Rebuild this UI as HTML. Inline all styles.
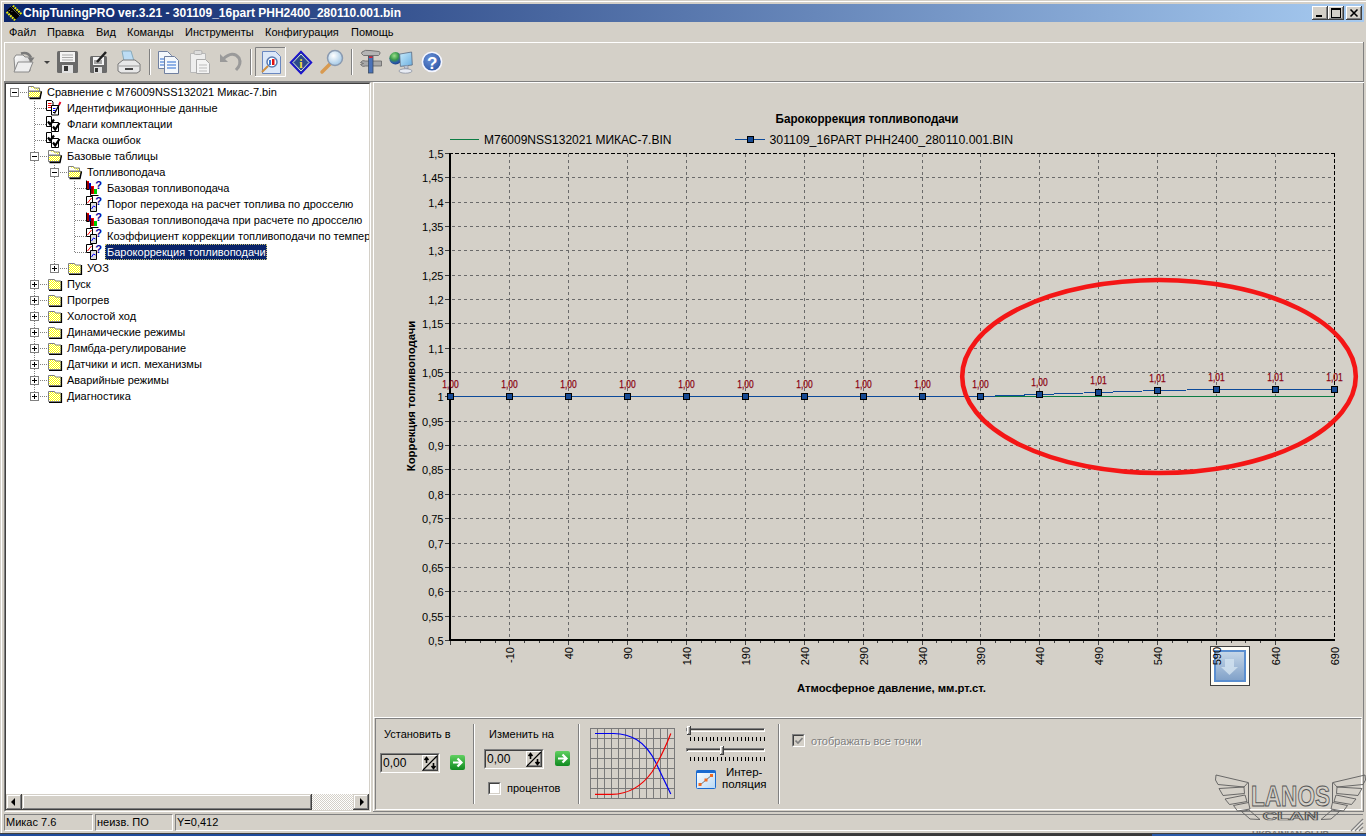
<!DOCTYPE html>
<html><head><meta charset="utf-8">
<style>
*{margin:0;padding:0;box-sizing:border-box}
html,body{width:1366px;height:836px;overflow:hidden;background:#d4d0c8;font-family:"Liberation Sans",sans-serif;font-size:11px;color:#000}
.a{position:absolute}
.t{position:absolute;white-space:nowrap;line-height:13px}
.bx{position:absolute}
</style></head><body>
<!-- window frame -->
<div class="a" style="left:1px;top:1px;width:1365px;height:1px;background:#fff"></div>
<div class="a" style="left:1px;top:1px;width:1px;height:835px;background:#fff"></div>
<!-- title bar -->
<div class="a" style="left:4px;top:4px;width:1360px;height:18px;background:linear-gradient(to right,#0a246a,#a6caf0)"></div>
<svg class="a" style="left:4px;top:4px" width="20" height="18">
<g transform="translate(10 9) rotate(-45) scale(0.85)">
<rect x="-4" y="-8" width="8" height="15" fill="#000"/>
<g fill="#f0f000"><rect x="-6.5" y="-7" width="2.5" height="2"/><rect x="-6.5" y="-4" width="2.5" height="2"/><rect x="-6.5" y="-1" width="2.5" height="2"/><rect x="-6.5" y="2" width="2.5" height="2"/><rect x="-6.5" y="5" width="2.5" height="2"/>
<rect x="4" y="-7" width="2.5" height="2"/><rect x="4" y="-4" width="2.5" height="2"/><rect x="4" y="-1" width="2.5" height="2"/><rect x="4" y="2" width="2.5" height="2"/><rect x="4" y="5" width="2.5" height="2"/></g>
<path d="M-3 -6h2M-1 -3h1" stroke="#aaa"/><path d="M2.5 -8v15" stroke="#bbb" stroke-dasharray="1 1"/>
</g></svg>
<div class="t" style="left:23px;top:6px;font-weight:bold;font-size:12px;color:#fff;line-height:14px">ChipTuningPRO ver.3.21 - 301109_16part PHH2400_280110.001.bin</div>
<!-- caption buttons -->
<svg class="a" style="left:1312px;top:6px" width="50" height="14" shape-rendering="crispEdges">
<g id="cb">
<rect x="0" y="0" width="16" height="14" fill="#404040"/><rect x="0" y="0" width="15" height="13" fill="#fff"/><rect x="1" y="1" width="14" height="12" fill="#808080"/><rect x="1" y="1" width="13" height="11" fill="#d4d0c8"/>
</g>
<use href="#cb" x="16"/><use href="#cb" x="34"/>
<rect x="4" y="9" width="6" height="2" fill="#000"/>
<rect x="19" y="2" width="9" height="9" fill="none" stroke="#000" stroke-width="1" transform="translate(0.5 0.5)"/><rect x="19" y="3" width="10" height="1" fill="#000"/>
<path d="M38.5 3.5l7 7M45.5 3.5l-7 7" stroke="#000" stroke-width="1.6" shape-rendering="auto"/>
</svg>

<!-- menu -->
<div class="t" style="left:9px;top:26px">Файл</div>
<div class="t" style="left:47px;top:26px">Правка</div>
<div class="t" style="left:96px;top:26px">Вид</div>
<div class="t" style="left:127px;top:26px">Команды</div>
<div class="t" style="left:185px;top:26px">Инструменты</div>
<div class="t" style="left:265px;top:26px">Конфигурация</div>
<div class="t" style="left:351px;top:26px">Помощь</div>

<!-- toolbar borders -->
<div class="a" style="left:4px;top:42px;width:1360px;height:1px;background:#fff"></div>
<div class="a" style="left:4px;top:42px;width:1px;height:40px;background:#fff"></div>
<div class="a" style="left:4px;top:81px;width:1360px;height:1px;background:#808080"></div>
<div class="a" style="left:1363px;top:42px;width:1px;height:770px;background:#808080"></div>
<svg class="a" style="left:0;top:42px" width="460" height="39">
<defs>
<linearGradient id="gpaper" x1="0" y1="0" x2="1" y2="1"><stop offset="0" stop-color="#fff"/><stop offset="1" stop-color="#c8c8c8"/></linearGradient>
<linearGradient id="gblue" x1="0" y1="0" x2="0" y2="1"><stop offset="0" stop-color="#d8e8f8"/><stop offset="1" stop-color="#8ab0dc"/></linearGradient>
<radialGradient id="glens" cx="0.4" cy="0.35" r="0.7"><stop offset="0" stop-color="#ffffff"/><stop offset="1" stop-color="#9cc4e4"/></radialGradient>
<radialGradient id="gglobe" cx="0.4" cy="0.3" r="0.75"><stop offset="0" stop-color="#9ae08a"/><stop offset="0.45" stop-color="#3a9a4a"/><stop offset="0.75" stop-color="#2a5aa8"/><stop offset="1" stop-color="#183a80"/></radialGradient>
<linearGradient id="gmon" x1="0" y1="0" x2="1" y2="1"><stop offset="0" stop-color="#c8ecfc"/><stop offset="1" stop-color="#6aaee0"/></linearGradient>
<radialGradient id="ghelp" cx="0.4" cy="0.35" r="0.7"><stop offset="0" stop-color="#6a92d8"/><stop offset="1" stop-color="#2a54a4"/></radialGradient>
</defs>
<path d="M14 16l2-3h7l2 2h5v14H15z" fill="url(#gpaper)" stroke="#8a8a8a"/>
<path d="M14 30l4-10h15l-4 10z" fill="#eee" stroke="#8a8a8a"/>
<path d="M21 11.5q7-2 10 4" stroke="#7a7a7a" stroke-width="2.6" fill="none"/><path d="M27.5 15.5h7l-3.5 5z" fill="#7a7a7a"/>
<path d="M44 19h6l-3 3z" fill="#404040"/>
<rect x="57" y="9" width="21" height="22" rx="1.5" fill="#6a6a6a"/><rect x="60" y="10" width="15" height="10" fill="#f4f4f4"/><path d="M62 13h11M62 15.5h11M62 18h11" stroke="#aaa"/><rect x="62" y="23" width="11" height="8" fill="#e0e0e0"/><rect x="64" y="24" width="4" height="5" fill="#333"/>
<rect x="90" y="14" width="17" height="17" rx="1.5" fill="#6a6a6a"/><rect x="93" y="15" width="11" height="8" fill="#f4f4f4"/><path d="M94 19h8M94 21h8" stroke="#555"/><rect x="94" y="25" width="8" height="6" fill="#e0e0e0"/><rect x="95" y="26" width="3" height="4" fill="#333"/>
<path d="M97 20l9-10" stroke="#222" stroke-width="2.5"/>
<path d="M122 9h9l3 10h-10z" fill="#bcdcf4" stroke="#8ab"/>
<path d="M118 22l5-4h12l5 4v7l-3 2h-16l-3-2z" fill="#e8e8e8" stroke="#777"/><path d="M119 24h20" stroke="#999"/><rect x="125" y="26" width="8" height="2" fill="#444"/>
<rect x="149" y="7" width="1" height="26" fill="#808080"/><rect x="150" y="7" width="1" height="26" fill="#fff"/>
<path d="M158.5 9.5h9l4 4v13h-13z" fill="#f4f8fc" stroke="#7080a0"/><path d="M160 17h6M160 20h6M160 23h6" stroke="#2a6ad0" stroke-width="1.2"/>
<path d="M164.5 14.5h10l4 4v13h-14z" fill="#f4f8fc" stroke="#7080a0"/><path d="M167 20h9M167 23h9M167 26h9" stroke="#2a6ad0" stroke-width="1.2"/>
<path d="M190.5 11.5h15v19h-15z" fill="#eee" stroke="#b8b8b8"/><rect x="194" y="8.5" width="8" height="4" rx="1.5" fill="#ddd" stroke="#b0b0b0"/>
<path d="M196.5 17.5h9l4 4v10h-13z" fill="#f4f4f4" stroke="#aaa"/><path d="M199 23h8M199 26h8M199 29h8" stroke="#bbb"/>
<path d="M223 17q10-9 16-1q3 6-3 12" stroke="#9a9a9a" stroke-width="3" fill="none"/><path d="M220 12v8h8z" fill="#9a9a9a"/>
<rect x="250" y="7" width="1" height="26" fill="#808080"/><rect x="251" y="7" width="1" height="26" fill="#fff"/>
<rect x="255" y="5" width="31" height="30" fill="#dbd8d1"/><path d="M255.5 34V5.5H285.5" stroke="#808080" fill="none"/><path d="M255 34.5H285.5V5" stroke="#fff" fill="none"/>
<path d="M262.5 9.5h13l5 5v17h-18z" fill="#dce8f8" stroke="#6a88c0"/><circle cx="272" cy="20" r="5" fill="#fff" stroke="#5a7ab0" stroke-width="1.5"/><rect x="272" y="17" width="2.5" height="6" fill="#e01010"/><rect x="269" y="18" width="2" height="5" fill="#3a7ad0"/><path d="M268 24l-6 6" stroke="#d09040" stroke-width="2"/>
<path d="M301 9.5L311.5 20.5L301 31.5L290.5 20.5Z" fill="#2c4a8a" stroke="#1a10d0" stroke-width="1.6"/><path d="M301 12L309 20.5L301 29L293 20.5Z" fill="none" stroke="#fff" stroke-width="0.8"/><text x="301" y="25.5" font-size="12" font-weight="bold" fill="#f0e040" text-anchor="middle" font-family="Liberation Serif">i</text>
<path d="M322 30l8-8" stroke="#d89a50" stroke-width="3.5" stroke-linecap="round"/><circle cx="335" cy="16" r="7.5" fill="url(#glens)" stroke="#8a9ab0" stroke-width="1.5"/>
<rect x="351" y="7" width="1" height="26" fill="#808080"/><rect x="352" y="7" width="1" height="26" fill="#fff"/>
<path d="M360.5 20.5q2-3 5-1.5h16v5h-16q-3 1.5-5-1.5l3-1z" fill="#a8a8a8" stroke="#666" stroke-width="0.8"/>
<rect x="368.5" y="14.5" width="4.5" height="16.5" fill="#4a72b8" stroke="#3a4a60" stroke-width="0.8"/><rect x="369" y="14.5" width="3.5" height="1.5" fill="#e02030"/>
<path d="M362 10q3-2.5 8-1.5l9 1q2 0.5 0.5 3l-1 1h-15l-2-2z" fill="#b4b4b4" stroke="#6a6a6a" stroke-width="0.9"/>
<circle cx="395.5" cy="16.299999999999997" r="6.2" fill="url(#gglobe)"/>
<path d="M399.7 12.100000000000001L411.6 10L412.3 23L400.4 24.400000000000006Z" fill="url(#gmon)" stroke="#5a6a80" stroke-width="0.8"/>
<path d="M404 24l1 3h3l0-3.5" fill="#b8c0d0" stroke="#7a8090" stroke-width="0.6"/><ellipse cx="405.5" cy="29" rx="6.5" ry="2.2" fill="#e8ecf4" stroke="#8a90a0" stroke-width="0.8"/>
<circle cx="432" cy="19.799999999999997" r="9.6" fill="url(#ghelp)" stroke="#f4f6ff" stroke-width="1.6"/><text x="432.3" y="26.799999999999997" font-size="17" font-weight="bold" fill="#fff" text-anchor="middle" font-family="Liberation Sans">?</text>
</svg>

<!-- tree panel -->
<div class="a" style="left:4px;top:82px;width:367px;height:730px;border-top:1px solid #808080;border-left:1px solid #808080;border-right:1px solid #fff;border-bottom:1px solid #fff"></div>
<div class="a" style="left:5px;top:83px;width:365px;height:728px;border-top:1px solid #404040;border-left:1px solid #404040;border-right:1px solid #d4d0c8;border-bottom:1px solid #d4d0c8;background:#fff"></div>
<svg class="a" style="left:6px;top:84px" width="363" height="710">
<defs>
<pattern id="chk" width="2" height="2" patternUnits="userSpaceOnUse"><rect width="2" height="2" fill="#ffff00"/><rect width="1" height="1" fill="#fff"/><rect x="1" y="1" width="1" height="1" fill="#fff"/></pattern>
<symbol id="fclosed" viewBox="0 0 16 16"><path d="M1.5 3.5h6l1 1.5h5.5v8.5h-12.5z" fill="url(#chk)" stroke="#808080"/><path d="M14.5 5v9.5H2" stroke="#000" stroke-width="1.2" fill="none"/></symbol>
<symbol id="fopen" viewBox="0 0 16 16"><path d="M1.5 2.5h5l1 1.5h5v3" fill="url(#chk)" stroke="#808080"/><path d="M1.5 2.5v11h12v-6.5h-12" fill="url(#chk)" stroke="#808080"/><path d="M1.5 7.5h13l-2 6h-11z" fill="url(#chk)" stroke="#808080"/><path d="M14.5 7.5l-1.5 7H2.5" stroke="#000" stroke-width="1.3" fill="none"/></symbol>
<symbol id="docedit" viewBox="0 0 16 16"><path d="M0.5 0.5h5l1.5 1.5v8.5h-6.5z" fill="#fff" stroke="#000"/><path d="M2 3.5h3.5M2 5.5h3.5M2 7.5h3.5" stroke="#f00"/><path d="M5.5 5.5h7v9.5h-7z" fill="#fff" stroke="#000"/><path d="M7 8.5h2.5M7 10.5h2.5" stroke="#00f"/><path d="M7 12.5h2" stroke="#000"/><path d="M8.5 13.5L13 5" stroke="#000" stroke-width="1.4"/><path d="M13 5L14.5 2" stroke="#e00020" stroke-width="1.8"/></symbol>
<symbol id="check" viewBox="0 0 16 16"><path d="M0.5 0.5h5v10h-5z" fill="#fff" stroke="#000"/><path d="M5.5 6.5h7v9h-7z" fill="#fff" stroke="#000"/><path d="M2 5.5l2.2 3 3.8-5" stroke="#000" stroke-width="2.2" fill="none"/><path d="M7 10.5l2.2 3 4.3-6.5" stroke="#000" stroke-width="2.2" fill="none"/></symbol>
<symbol id="bar" viewBox="0 0 16 16"><path d="M0.5 0.5v9h3M4.5 4.5v11h8" stroke="#000" fill="none"/><rect x="1" y="1" width="2" height="8" fill="#f00"/><rect x="3" y="3" width="2" height="6" fill="#00f"/><rect x="5" y="6" width="3" height="8" fill="#f00"/><rect x="8" y="9" width="3" height="5" fill="#0c0"/><path d="M2 2v7M4 4v6M6 7v7" stroke="#000" stroke-width="0.8"/><text x="12.5" y="9" font-size="11" font-weight="bold" fill="#0000a0" text-anchor="middle" font-family="Liberation Sans">?</text></symbol>
<symbol id="tbl" viewBox="0 0 16 16"><path d="M0.5 0.5h6v8h-6z" fill="#fff" stroke="#000"/><path d="M1.5 7l4-5" stroke="#f00"/><path d="M4.5 6.5h6v9h-6z" fill="#ddd" stroke="#000"/><path d="M5.5 13l2-3 2 1" stroke="#00f" fill="none"/><text x="12.5" y="9" font-size="11" font-weight="bold" fill="#0000a0" text-anchor="middle" font-family="Liberation Sans">?</text></symbol>
</defs>
<g fill="#808080"><rect x="28" y="17" width="1" height="1"/><rect x="28" y="19" width="1" height="1"/><rect x="28" y="21" width="1" height="1"/><rect x="28" y="23" width="1" height="1"/><rect x="28" y="25" width="1" height="1"/><rect x="28" y="27" width="1" height="1"/><rect x="28" y="29" width="1" height="1"/><rect x="28" y="31" width="1" height="1"/><rect x="28" y="33" width="1" height="1"/><rect x="28" y="35" width="1" height="1"/><rect x="28" y="37" width="1" height="1"/><rect x="28" y="39" width="1" height="1"/><rect x="28" y="41" width="1" height="1"/><rect x="28" y="43" width="1" height="1"/><rect x="28" y="45" width="1" height="1"/><rect x="28" y="47" width="1" height="1"/><rect x="28" y="49" width="1" height="1"/><rect x="28" y="51" width="1" height="1"/><rect x="28" y="53" width="1" height="1"/><rect x="28" y="55" width="1" height="1"/><rect x="28" y="57" width="1" height="1"/><rect x="28" y="59" width="1" height="1"/><rect x="28" y="61" width="1" height="1"/><rect x="28" y="63" width="1" height="1"/><rect x="28" y="65" width="1" height="1"/><rect x="28" y="67" width="1" height="1"/><rect x="28" y="69" width="1" height="1"/><rect x="28" y="71" width="1" height="1"/><rect x="28" y="73" width="1" height="1"/><rect x="28" y="75" width="1" height="1"/><rect x="28" y="77" width="1" height="1"/><rect x="28" y="79" width="1" height="1"/><rect x="28" y="81" width="1" height="1"/><rect x="28" y="83" width="1" height="1"/><rect x="28" y="85" width="1" height="1"/><rect x="28" y="87" width="1" height="1"/><rect x="28" y="89" width="1" height="1"/><rect x="28" y="91" width="1" height="1"/><rect x="28" y="93" width="1" height="1"/><rect x="28" y="95" width="1" height="1"/><rect x="28" y="97" width="1" height="1"/><rect x="28" y="99" width="1" height="1"/><rect x="28" y="101" width="1" height="1"/><rect x="28" y="103" width="1" height="1"/><rect x="28" y="105" width="1" height="1"/><rect x="28" y="107" width="1" height="1"/><rect x="28" y="109" width="1" height="1"/><rect x="28" y="111" width="1" height="1"/><rect x="28" y="113" width="1" height="1"/><rect x="28" y="115" width="1" height="1"/><rect x="28" y="117" width="1" height="1"/><rect x="28" y="119" width="1" height="1"/><rect x="28" y="121" width="1" height="1"/><rect x="28" y="123" width="1" height="1"/><rect x="28" y="125" width="1" height="1"/><rect x="28" y="127" width="1" height="1"/><rect x="28" y="129" width="1" height="1"/><rect x="28" y="131" width="1" height="1"/><rect x="28" y="133" width="1" height="1"/><rect x="28" y="135" width="1" height="1"/><rect x="28" y="137" width="1" height="1"/><rect x="28" y="139" width="1" height="1"/><rect x="28" y="141" width="1" height="1"/><rect x="28" y="143" width="1" height="1"/><rect x="28" y="145" width="1" height="1"/><rect x="28" y="147" width="1" height="1"/><rect x="28" y="149" width="1" height="1"/><rect x="28" y="151" width="1" height="1"/><rect x="28" y="153" width="1" height="1"/><rect x="28" y="155" width="1" height="1"/><rect x="28" y="157" width="1" height="1"/><rect x="28" y="159" width="1" height="1"/><rect x="28" y="161" width="1" height="1"/><rect x="28" y="163" width="1" height="1"/><rect x="28" y="165" width="1" height="1"/><rect x="28" y="167" width="1" height="1"/><rect x="28" y="169" width="1" height="1"/><rect x="28" y="171" width="1" height="1"/><rect x="28" y="173" width="1" height="1"/><rect x="28" y="175" width="1" height="1"/><rect x="28" y="177" width="1" height="1"/><rect x="28" y="179" width="1" height="1"/><rect x="28" y="181" width="1" height="1"/><rect x="28" y="183" width="1" height="1"/><rect x="28" y="185" width="1" height="1"/><rect x="28" y="187" width="1" height="1"/><rect x="28" y="189" width="1" height="1"/><rect x="28" y="191" width="1" height="1"/><rect x="28" y="193" width="1" height="1"/><rect x="28" y="195" width="1" height="1"/><rect x="28" y="197" width="1" height="1"/><rect x="28" y="199" width="1" height="1"/><rect x="28" y="201" width="1" height="1"/><rect x="28" y="203" width="1" height="1"/><rect x="28" y="205" width="1" height="1"/><rect x="28" y="207" width="1" height="1"/><rect x="28" y="209" width="1" height="1"/><rect x="28" y="211" width="1" height="1"/><rect x="28" y="213" width="1" height="1"/><rect x="28" y="215" width="1" height="1"/><rect x="28" y="217" width="1" height="1"/><rect x="28" y="219" width="1" height="1"/><rect x="28" y="221" width="1" height="1"/><rect x="28" y="223" width="1" height="1"/><rect x="28" y="225" width="1" height="1"/><rect x="28" y="227" width="1" height="1"/><rect x="28" y="229" width="1" height="1"/><rect x="28" y="231" width="1" height="1"/><rect x="28" y="233" width="1" height="1"/><rect x="28" y="235" width="1" height="1"/><rect x="28" y="237" width="1" height="1"/><rect x="28" y="239" width="1" height="1"/><rect x="28" y="241" width="1" height="1"/><rect x="28" y="243" width="1" height="1"/><rect x="28" y="245" width="1" height="1"/><rect x="28" y="247" width="1" height="1"/><rect x="28" y="249" width="1" height="1"/><rect x="28" y="251" width="1" height="1"/><rect x="28" y="253" width="1" height="1"/><rect x="28" y="255" width="1" height="1"/><rect x="28" y="257" width="1" height="1"/><rect x="28" y="259" width="1" height="1"/><rect x="28" y="261" width="1" height="1"/><rect x="28" y="263" width="1" height="1"/><rect x="28" y="265" width="1" height="1"/><rect x="28" y="267" width="1" height="1"/><rect x="28" y="269" width="1" height="1"/><rect x="28" y="271" width="1" height="1"/><rect x="28" y="273" width="1" height="1"/><rect x="28" y="275" width="1" height="1"/><rect x="28" y="277" width="1" height="1"/><rect x="28" y="279" width="1" height="1"/><rect x="28" y="281" width="1" height="1"/><rect x="28" y="283" width="1" height="1"/><rect x="28" y="285" width="1" height="1"/><rect x="28" y="287" width="1" height="1"/><rect x="28" y="289" width="1" height="1"/><rect x="28" y="291" width="1" height="1"/><rect x="28" y="293" width="1" height="1"/><rect x="28" y="295" width="1" height="1"/><rect x="28" y="297" width="1" height="1"/><rect x="28" y="299" width="1" height="1"/><rect x="28" y="301" width="1" height="1"/><rect x="28" y="303" width="1" height="1"/><rect x="28" y="305" width="1" height="1"/><rect x="28" y="307" width="1" height="1"/><rect x="28" y="309" width="1" height="1"/><rect x="28" y="311" width="1" height="1"/><rect x="48" y="81" width="1" height="1"/><rect x="48" y="83" width="1" height="1"/><rect x="48" y="85" width="1" height="1"/><rect x="48" y="87" width="1" height="1"/><rect x="48" y="89" width="1" height="1"/><rect x="48" y="91" width="1" height="1"/><rect x="48" y="93" width="1" height="1"/><rect x="48" y="95" width="1" height="1"/><rect x="48" y="97" width="1" height="1"/><rect x="48" y="99" width="1" height="1"/><rect x="48" y="101" width="1" height="1"/><rect x="48" y="103" width="1" height="1"/><rect x="48" y="105" width="1" height="1"/><rect x="48" y="107" width="1" height="1"/><rect x="48" y="109" width="1" height="1"/><rect x="48" y="111" width="1" height="1"/><rect x="48" y="113" width="1" height="1"/><rect x="48" y="115" width="1" height="1"/><rect x="48" y="117" width="1" height="1"/><rect x="48" y="119" width="1" height="1"/><rect x="48" y="121" width="1" height="1"/><rect x="48" y="123" width="1" height="1"/><rect x="48" y="125" width="1" height="1"/><rect x="48" y="127" width="1" height="1"/><rect x="48" y="129" width="1" height="1"/><rect x="48" y="131" width="1" height="1"/><rect x="48" y="133" width="1" height="1"/><rect x="48" y="135" width="1" height="1"/><rect x="48" y="137" width="1" height="1"/><rect x="48" y="139" width="1" height="1"/><rect x="48" y="141" width="1" height="1"/><rect x="48" y="143" width="1" height="1"/><rect x="48" y="145" width="1" height="1"/><rect x="48" y="147" width="1" height="1"/><rect x="48" y="149" width="1" height="1"/><rect x="48" y="151" width="1" height="1"/><rect x="48" y="153" width="1" height="1"/><rect x="48" y="155" width="1" height="1"/><rect x="48" y="157" width="1" height="1"/><rect x="48" y="159" width="1" height="1"/><rect x="48" y="161" width="1" height="1"/><rect x="48" y="163" width="1" height="1"/><rect x="48" y="165" width="1" height="1"/><rect x="48" y="167" width="1" height="1"/><rect x="48" y="169" width="1" height="1"/><rect x="48" y="171" width="1" height="1"/><rect x="48" y="173" width="1" height="1"/><rect x="48" y="175" width="1" height="1"/><rect x="48" y="177" width="1" height="1"/><rect x="48" y="179" width="1" height="1"/><rect x="48" y="181" width="1" height="1"/><rect x="48" y="183" width="1" height="1"/><rect x="68" y="97" width="1" height="1"/><rect x="68" y="99" width="1" height="1"/><rect x="68" y="101" width="1" height="1"/><rect x="68" y="103" width="1" height="1"/><rect x="68" y="105" width="1" height="1"/><rect x="68" y="107" width="1" height="1"/><rect x="68" y="109" width="1" height="1"/><rect x="68" y="111" width="1" height="1"/><rect x="68" y="113" width="1" height="1"/><rect x="68" y="115" width="1" height="1"/><rect x="68" y="117" width="1" height="1"/><rect x="68" y="119" width="1" height="1"/><rect x="68" y="121" width="1" height="1"/><rect x="68" y="123" width="1" height="1"/><rect x="68" y="125" width="1" height="1"/><rect x="68" y="127" width="1" height="1"/><rect x="68" y="129" width="1" height="1"/><rect x="68" y="131" width="1" height="1"/><rect x="68" y="133" width="1" height="1"/><rect x="68" y="135" width="1" height="1"/><rect x="68" y="137" width="1" height="1"/><rect x="68" y="139" width="1" height="1"/><rect x="68" y="141" width="1" height="1"/><rect x="68" y="143" width="1" height="1"/><rect x="68" y="145" width="1" height="1"/><rect x="68" y="147" width="1" height="1"/><rect x="68" y="149" width="1" height="1"/><rect x="68" y="151" width="1" height="1"/><rect x="68" y="153" width="1" height="1"/><rect x="68" y="155" width="1" height="1"/><rect x="68" y="157" width="1" height="1"/><rect x="68" y="159" width="1" height="1"/><rect x="68" y="161" width="1" height="1"/><rect x="68" y="163" width="1" height="1"/><rect x="68" y="165" width="1" height="1"/><rect x="68" y="167" width="1" height="1"/><rect x="14" y="8" width="1" height="1"/><rect x="16" y="8" width="1" height="1"/><rect x="18" y="8" width="1" height="1"/><rect x="20" y="8" width="1" height="1"/><rect x="29" y="24" width="1" height="1"/><rect x="31" y="24" width="1" height="1"/><rect x="33" y="24" width="1" height="1"/><rect x="35" y="24" width="1" height="1"/><rect x="37" y="24" width="1" height="1"/><rect x="39" y="24" width="1" height="1"/><rect x="29" y="40" width="1" height="1"/><rect x="31" y="40" width="1" height="1"/><rect x="33" y="40" width="1" height="1"/><rect x="35" y="40" width="1" height="1"/><rect x="37" y="40" width="1" height="1"/><rect x="39" y="40" width="1" height="1"/><rect x="29" y="56" width="1" height="1"/><rect x="31" y="56" width="1" height="1"/><rect x="33" y="56" width="1" height="1"/><rect x="35" y="56" width="1" height="1"/><rect x="37" y="56" width="1" height="1"/><rect x="39" y="56" width="1" height="1"/><rect x="34" y="72" width="1" height="1"/><rect x="36" y="72" width="1" height="1"/><rect x="38" y="72" width="1" height="1"/><rect x="40" y="72" width="1" height="1"/><rect x="54" y="88" width="1" height="1"/><rect x="56" y="88" width="1" height="1"/><rect x="58" y="88" width="1" height="1"/><rect x="60" y="88" width="1" height="1"/><rect x="69" y="104" width="1" height="1"/><rect x="71" y="104" width="1" height="1"/><rect x="73" y="104" width="1" height="1"/><rect x="75" y="104" width="1" height="1"/><rect x="77" y="104" width="1" height="1"/><rect x="79" y="104" width="1" height="1"/><rect x="69" y="120" width="1" height="1"/><rect x="71" y="120" width="1" height="1"/><rect x="73" y="120" width="1" height="1"/><rect x="75" y="120" width="1" height="1"/><rect x="77" y="120" width="1" height="1"/><rect x="79" y="120" width="1" height="1"/><rect x="69" y="136" width="1" height="1"/><rect x="71" y="136" width="1" height="1"/><rect x="73" y="136" width="1" height="1"/><rect x="75" y="136" width="1" height="1"/><rect x="77" y="136" width="1" height="1"/><rect x="79" y="136" width="1" height="1"/><rect x="69" y="152" width="1" height="1"/><rect x="71" y="152" width="1" height="1"/><rect x="73" y="152" width="1" height="1"/><rect x="75" y="152" width="1" height="1"/><rect x="77" y="152" width="1" height="1"/><rect x="79" y="152" width="1" height="1"/><rect x="69" y="168" width="1" height="1"/><rect x="71" y="168" width="1" height="1"/><rect x="73" y="168" width="1" height="1"/><rect x="75" y="168" width="1" height="1"/><rect x="77" y="168" width="1" height="1"/><rect x="79" y="168" width="1" height="1"/><rect x="54" y="184" width="1" height="1"/><rect x="56" y="184" width="1" height="1"/><rect x="58" y="184" width="1" height="1"/><rect x="60" y="184" width="1" height="1"/><rect x="34" y="200" width="1" height="1"/><rect x="36" y="200" width="1" height="1"/><rect x="38" y="200" width="1" height="1"/><rect x="40" y="200" width="1" height="1"/><rect x="34" y="216" width="1" height="1"/><rect x="36" y="216" width="1" height="1"/><rect x="38" y="216" width="1" height="1"/><rect x="40" y="216" width="1" height="1"/><rect x="34" y="232" width="1" height="1"/><rect x="36" y="232" width="1" height="1"/><rect x="38" y="232" width="1" height="1"/><rect x="40" y="232" width="1" height="1"/><rect x="34" y="248" width="1" height="1"/><rect x="36" y="248" width="1" height="1"/><rect x="38" y="248" width="1" height="1"/><rect x="40" y="248" width="1" height="1"/><rect x="34" y="264" width="1" height="1"/><rect x="36" y="264" width="1" height="1"/><rect x="38" y="264" width="1" height="1"/><rect x="40" y="264" width="1" height="1"/><rect x="34" y="280" width="1" height="1"/><rect x="36" y="280" width="1" height="1"/><rect x="38" y="280" width="1" height="1"/><rect x="40" y="280" width="1" height="1"/><rect x="34" y="296" width="1" height="1"/><rect x="36" y="296" width="1" height="1"/><rect x="38" y="296" width="1" height="1"/><rect x="40" y="296" width="1" height="1"/><rect x="34" y="312" width="1" height="1"/><rect x="36" y="312" width="1" height="1"/><rect x="38" y="312" width="1" height="1"/><rect x="40" y="312" width="1" height="1"/></g>
<rect x="4.5" y="4.5" width="8" height="8" fill="#fff" stroke="#808080"/>
<rect x="6" y="8" width="5" height="1" fill="#000"/>
<use href="#fopen" x="21" y="0" width="16" height="16"/>
<use href="#docedit" x="40" y="16" width="16" height="16"/>
<use href="#check" x="40" y="32" width="16" height="16"/>
<use href="#check" x="40" y="48" width="16" height="16"/>
<rect x="24.5" y="68.5" width="8" height="8" fill="#fff" stroke="#808080"/>
<rect x="26" y="72" width="5" height="1" fill="#000"/>
<use href="#fopen" x="41" y="64" width="16" height="16"/>
<rect x="44.5" y="84.5" width="8" height="8" fill="#fff" stroke="#808080"/>
<rect x="46" y="88" width="5" height="1" fill="#000"/>
<use href="#fopen" x="61" y="80" width="16" height="16"/>
<use href="#bar" x="80" y="96" width="16" height="16"/>
<use href="#tbl" x="80" y="112" width="16" height="16"/>
<use href="#bar" x="80" y="128" width="16" height="16"/>
<use href="#tbl" x="80" y="144" width="16" height="16"/>
<use href="#tbl" x="80" y="160" width="16" height="16"/>
<rect x="44.5" y="180.5" width="8" height="8" fill="#fff" stroke="#808080"/>
<rect x="46" y="184" width="5" height="1" fill="#000"/>
<rect x="48" y="182" width="1" height="5" fill="#000"/>
<use href="#fclosed" x="61" y="176" width="16" height="16"/>
<rect x="24.5" y="196.5" width="8" height="8" fill="#fff" stroke="#808080"/>
<rect x="26" y="200" width="5" height="1" fill="#000"/>
<rect x="28" y="198" width="1" height="5" fill="#000"/>
<use href="#fclosed" x="41" y="192" width="16" height="16"/>
<rect x="24.5" y="212.5" width="8" height="8" fill="#fff" stroke="#808080"/>
<rect x="26" y="216" width="5" height="1" fill="#000"/>
<rect x="28" y="214" width="1" height="5" fill="#000"/>
<use href="#fclosed" x="41" y="208" width="16" height="16"/>
<rect x="24.5" y="228.5" width="8" height="8" fill="#fff" stroke="#808080"/>
<rect x="26" y="232" width="5" height="1" fill="#000"/>
<rect x="28" y="230" width="1" height="5" fill="#000"/>
<use href="#fclosed" x="41" y="224" width="16" height="16"/>
<rect x="24.5" y="244.5" width="8" height="8" fill="#fff" stroke="#808080"/>
<rect x="26" y="248" width="5" height="1" fill="#000"/>
<rect x="28" y="246" width="1" height="5" fill="#000"/>
<use href="#fclosed" x="41" y="240" width="16" height="16"/>
<rect x="24.5" y="260.5" width="8" height="8" fill="#fff" stroke="#808080"/>
<rect x="26" y="264" width="5" height="1" fill="#000"/>
<rect x="28" y="262" width="1" height="5" fill="#000"/>
<use href="#fclosed" x="41" y="256" width="16" height="16"/>
<rect x="24.5" y="276.5" width="8" height="8" fill="#fff" stroke="#808080"/>
<rect x="26" y="280" width="5" height="1" fill="#000"/>
<rect x="28" y="278" width="1" height="5" fill="#000"/>
<use href="#fclosed" x="41" y="272" width="16" height="16"/>
<rect x="24.5" y="292.5" width="8" height="8" fill="#fff" stroke="#808080"/>
<rect x="26" y="296" width="5" height="1" fill="#000"/>
<rect x="28" y="294" width="1" height="5" fill="#000"/>
<use href="#fclosed" x="41" y="288" width="16" height="16"/>
<rect x="24.5" y="308.5" width="8" height="8" fill="#fff" stroke="#808080"/>
<rect x="26" y="312" width="5" height="1" fill="#000"/>
<rect x="28" y="310" width="1" height="5" fill="#000"/>
<use href="#fclosed" x="41" y="304" width="16" height="16"/>
</svg>
<div class="a" style="left:6px;top:84px;width:363px;height:710px;overflow:hidden">
<div class="t" style="left:41px;top:0px;line-height:16px">Сравнение с M76009NSS132021 Микас-7.bin</div>
<div class="t" style="left:61px;top:16px;line-height:16px">Идентификационные данные</div>
<div class="t" style="left:61px;top:32px;line-height:16px">Флаги комплектации</div>
<div class="t" style="left:61px;top:48px;line-height:16px">Маска ошибок</div>
<div class="t" style="left:61px;top:64px;line-height:16px">Базовые таблицы</div>
<div class="t" style="left:81px;top:80px;line-height:16px">Топливоподача</div>
<div class="t" style="left:101px;top:96px;line-height:16px">Базовая топливоподача</div>
<div class="t" style="left:101px;top:112px;line-height:16px">Порог перехода на расчет топлива по дросселю</div>
<div class="t" style="left:101px;top:128px;line-height:16px">Базовая топливоподача при расчете по дросселю</div>
<div class="t" style="left:101px;top:144px;line-height:16px">Коэффициент коррекции топливоподачи по температуре</div>
<div class="a" style="left:99px;top:160px;width:162px;height:16px;background:#0a246a;outline:1px dotted #c8c070;outline-offset:-1px"></div>
<div class="t" style="left:101px;top:160px;line-height:16px;color:#fff">Барокоррекция топливоподачи</div>
<div class="t" style="left:81px;top:176px;line-height:16px">УОЗ</div>
<div class="t" style="left:61px;top:192px;line-height:16px">Пуск</div>
<div class="t" style="left:61px;top:208px;line-height:16px">Прогрев</div>
<div class="t" style="left:61px;top:224px;line-height:16px">Холостой ход</div>
<div class="t" style="left:61px;top:240px;line-height:16px">Динамические режимы</div>
<div class="t" style="left:61px;top:256px;line-height:16px">Лямбда-регулирование</div>
<div class="t" style="left:61px;top:272px;line-height:16px">Датчики и исп. механизмы</div>
<div class="t" style="left:61px;top:288px;line-height:16px">Аварийные режимы</div>
<div class="t" style="left:61px;top:304px;line-height:16px">Диагностика</div>
</div>
<!-- h scrollbar -->
<div class="a" style="left:6px;top:794px;width:363px;height:16px;background-color:#d4d0c8;background-image:repeating-conic-gradient(#fff 0 25%,#d4d0c8 0 50%);background-size:2px 2px"></div>
<svg class="a" style="left:6px;top:794px" width="363" height="16" shape-rendering="crispEdges">
<g id="sbtn"><rect x="0" y="0" width="16" height="16" fill="#404040"/><rect x="0" y="0" width="15" height="15" fill="#d4d0c8"/><rect x="1" y="1" width="14" height="14" fill="#808080"/><rect x="1" y="1" width="13" height="13" fill="#fff"/><rect x="2" y="2" width="12" height="12" fill="#d4d0c8"/></g>
<use href="#sbtn" x="347"/>
<rect x="16" y="0" width="290" height="16" fill="#404040"/><rect x="16" y="0" width="289" height="15" fill="#d4d0c8"/><rect x="17" y="1" width="288" height="14" fill="#808080"/><rect x="17" y="1" width="287" height="13" fill="#fff"/><rect x="18" y="2" width="286" height="12" fill="#d4d0c8"/>
<path d="M5 8L9 4V12Z" fill="#000" shape-rendering="auto"/>
<path d="M358 8L354 4V12Z" fill="#000" shape-rendering="auto"/>
</svg>

<!-- right panel -->
<div class="a" style="left:373px;top:82px;width:991px;height:1px;background:#fff"></div>
<div class="a" style="left:373px;top:82px;width:1px;height:730px;background:#fff"></div>
<div class="a" style="left:373px;top:811px;width:991px;height:1px;background:#808080"></div>

<!-- bottom panel -->
<div class="a" style="left:373px;top:717px;width:989px;height:1px;background:#fff"></div>
<div class="a" style="left:375px;top:718px;width:987px;height:92px;border-top:1px solid #808080;border-left:1px solid #808080;border-right:1px solid #fff;border-bottom:1px solid #fff"></div>
<div class="t" style="left:384px;top:728px;">Установить в</div>
<div class="t" style="left:489px;top:728px;">Изменить на</div>
<div class="a" style="left:380px;top:753px;width:60px;height:20px;border-top:1px solid #808080;border-left:1px solid #808080;border-right:1px solid #fff;border-bottom:1px solid #fff"></div><div class="a" style="left:381px;top:754px;width:58px;height:18px;border-top:1px solid #404040;border-left:1px solid #404040;border-right:1px solid #d4d0c8;border-bottom:1px solid #d4d0c8"></div><div class="t" style="left:383px;top:757px;font-size:12px">0,00</div><svg class="a" style="left:422px;top:755px" width="16" height="16" shape-rendering="crispEdges"><rect width="16" height="16" fill="#404040"/><rect width="15" height="15" fill="#fff"/><rect x="1" y="1" width="14" height="14" fill="#808080"/><rect x="1" y="1" width="13" height="13" fill="#d4d0c8"/><path d="M1 15L15 1" stroke="#000" stroke-width="1.2" shape-rendering="auto"/><path d="M4.5 8V3M2.5 5L4.5 2.5L6.5 5" stroke="#000" stroke-width="1.6" fill="none" shape-rendering="auto"/><path d="M11.5 8v5M9.5 11L11.5 13.5L13.5 11" stroke="#000" stroke-width="1.6" fill="none" shape-rendering="auto"/></svg>
<div class="a" style="left:484px;top:749px;width:60px;height:20px;border-top:1px solid #808080;border-left:1px solid #808080;border-right:1px solid #fff;border-bottom:1px solid #fff"></div><div class="a" style="left:485px;top:750px;width:58px;height:18px;border-top:1px solid #404040;border-left:1px solid #404040;border-right:1px solid #d4d0c8;border-bottom:1px solid #d4d0c8"></div><div class="t" style="left:487px;top:753px;font-size:12px">0,00</div><svg class="a" style="left:526px;top:751px" width="16" height="16" shape-rendering="crispEdges"><rect width="16" height="16" fill="#404040"/><rect width="15" height="15" fill="#fff"/><rect x="1" y="1" width="14" height="14" fill="#808080"/><rect x="1" y="1" width="13" height="13" fill="#d4d0c8"/><path d="M1 15L15 1" stroke="#000" stroke-width="1.2" shape-rendering="auto"/><path d="M4.5 8V3M2.5 5L4.5 2.5L6.5 5" stroke="#000" stroke-width="1.6" fill="none" shape-rendering="auto"/><path d="M11.5 8v5M9.5 11L11.5 13.5L13.5 11" stroke="#000" stroke-width="1.6" fill="none" shape-rendering="auto"/></svg>
<svg class="a" style="left:450px;top:755px" width="15" height="15"><defs><linearGradient id="gg450" x1="0" y1="0" x2="0" y2="1"><stop offset="0" stop-color="#60d060"/><stop offset="1" stop-color="#108a20"/></linearGradient></defs><rect x="0" y="0" width="15" height="15" rx="2" fill="url(#gg450)"/><path d="M3 7.5h8M7.5 3.5l4 4-4 4" stroke="#fff" stroke-width="2.2" fill="none"/></svg>
<svg class="a" style="left:555px;top:751px" width="15" height="15"><defs><linearGradient id="gg555" x1="0" y1="0" x2="0" y2="1"><stop offset="0" stop-color="#60d060"/><stop offset="1" stop-color="#108a20"/></linearGradient></defs><rect x="0" y="0" width="15" height="15" rx="2" fill="url(#gg555)"/><path d="M3 7.5h8M7.5 3.5l4 4-4 4" stroke="#fff" stroke-width="2.2" fill="none"/></svg>
<div class="a" style="left:488px;top:782px;width:13px;height:13px;border-top:1px solid #808080;border-left:1px solid #808080;border-right:1px solid #fff;border-bottom:1px solid #fff"></div><div class="a" style="left:489px;top:783px;width:11px;height:11px;border-top:1px solid #404040;border-left:1px solid #404040;border-right:1px solid #d4d0c8;border-bottom:1px solid #d4d0c8;background:#fff"></div>
<div class="t" style="left:507px;top:782px;">процентов</div>
<div class="a" style="left:473px;top:724px;width:1px;height:80px;background:#808080"></div><div class="a" style="left:474px;top:724px;width:1px;height:80px;background:#fff"></div>
<div class="a" style="left:578px;top:724px;width:1px;height:80px;background:#808080"></div><div class="a" style="left:579px;top:724px;width:1px;height:80px;background:#fff"></div>
<div class="a" style="left:778px;top:724px;width:1px;height:80px;background:#808080"></div><div class="a" style="left:779px;top:724px;width:1px;height:80px;background:#fff"></div>
<svg class="a" style="left:590px;top:728px" width="86" height="72"><path d="M0.5 0V71 M7.5 0V71 M14.5 0V71 M21.5 0V71 M28.5 0V71 M35.5 0V71 M42.5 0V71 M49.5 0V71 M56.5 0V71 M63.5 0V71 M70.5 0V71 M77.5 0V71 M84.5 0V71 M0 0.5H85 M0 10.5H85 M0 20.5H85 M0 30.5H85 M0 40.5H85 M0 50.5H85 M0 60.5H85 M0 70.5H85" stroke="#7a7a7a" stroke-width="1" shape-rendering="crispEdges"/><path d="M5 5.5H23.5C40 6 55 12 66 35Q74 52 80.8 66" stroke="#0000f0" stroke-width="1.2" fill="none"/><path d="M5 66.4H21.8C40 66 52 58 62 44Q72 28 80.8 5.5" stroke="#f00000" stroke-width="1.2" fill="none"/></svg>
<div class="a" style="left:686px;top:728px;width:79px;height:4px;border-top:1px solid #808080;border-left:1px solid #808080;border-right:1px solid #fff;border-bottom:1px solid #fff"></div><div class="a" style="left:687px;top:729px;width:77px;height:2px;border-top:1px solid #404040;border-left:1px solid #404040"></div><svg class="a" style="left:687px;top:726px" width="4" height="9" shape-rendering="crispEdges"><rect width="4" height="9" fill="#404040"/><rect width="3" height="8" fill="#fff"/><rect x="1" y="1" width="2" height="7" fill="#808080"/><rect x="1" y="1" width="1" height="6" fill="#d4d0c8"/></svg><svg class="a" style="left:688px;top:737px" width="80" height="5"><g fill="#000"><rect x="2" y="0" width="1" height="4"/><rect x="6" y="0" width="1" height="4"/><rect x="10" y="0" width="1" height="4"/><rect x="14" y="0" width="1" height="4"/><rect x="18" y="0" width="1" height="4"/><rect x="22" y="0" width="1" height="4"/><rect x="25" y="0" width="1" height="4"/><rect x="29" y="0" width="1" height="4"/><rect x="33" y="0" width="1" height="4"/><rect x="37" y="0" width="1" height="4"/><rect x="41" y="0" width="1" height="4"/><rect x="45" y="0" width="1" height="4"/><rect x="49" y="0" width="1" height="4"/><rect x="53" y="0" width="1" height="4"/><rect x="57" y="0" width="1" height="4"/><rect x="60" y="0" width="1" height="4"/><rect x="64" y="0" width="1" height="4"/><rect x="68" y="0" width="1" height="4"/><rect x="72" y="0" width="1" height="4"/><rect x="76" y="0" width="1" height="4"/></g></svg>
<div class="a" style="left:686px;top:748px;width:79px;height:4px;border-top:1px solid #808080;border-left:1px solid #808080;border-right:1px solid #fff;border-bottom:1px solid #fff"></div><div class="a" style="left:687px;top:749px;width:77px;height:2px;border-top:1px solid #404040;border-left:1px solid #404040"></div><svg class="a" style="left:720px;top:746px" width="4" height="9" shape-rendering="crispEdges"><rect width="4" height="9" fill="#404040"/><rect width="3" height="8" fill="#fff"/><rect x="1" y="1" width="2" height="7" fill="#808080"/><rect x="1" y="1" width="1" height="6" fill="#d4d0c8"/></svg><svg class="a" style="left:688px;top:757px" width="80" height="5"><g fill="#000"><rect x="2" y="0" width="1" height="4"/><rect x="6" y="0" width="1" height="4"/><rect x="10" y="0" width="1" height="4"/><rect x="14" y="0" width="1" height="4"/><rect x="18" y="0" width="1" height="4"/><rect x="22" y="0" width="1" height="4"/><rect x="25" y="0" width="1" height="4"/><rect x="29" y="0" width="1" height="4"/><rect x="33" y="0" width="1" height="4"/><rect x="37" y="0" width="1" height="4"/><rect x="41" y="0" width="1" height="4"/><rect x="45" y="0" width="1" height="4"/><rect x="49" y="0" width="1" height="4"/><rect x="53" y="0" width="1" height="4"/><rect x="57" y="0" width="1" height="4"/><rect x="60" y="0" width="1" height="4"/><rect x="64" y="0" width="1" height="4"/><rect x="68" y="0" width="1" height="4"/><rect x="72" y="0" width="1" height="4"/><rect x="76" y="0" width="1" height="4"/></g></svg>
<svg class="a" style="left:696px;top:770px" width="20" height="19"><defs><linearGradient id="gint" x1="0" y1="0" x2="1" y2="1"><stop offset="0" stop-color="#fff"/><stop offset="1" stop-color="#b8d8f4"/></linearGradient></defs><rect x="0.5" y="0.5" width="19" height="18" rx="1" fill="url(#gint)" stroke="#1a6ad0"/><rect x="0.5" y="0.5" width="19" height="2.5" fill="#1a6ad0"/><path d="M4 15L16 5" stroke="#555" stroke-width="0.8"/><rect x="2.5" y="13" width="3" height="3" fill="#f06a20"/><rect x="8.5" y="8.5" width="3" height="3" fill="#f06a20"/><rect x="14" y="4" width="3" height="3" fill="#f06a20"/></svg>
<div class="t" style="left:726px;top:766px;font-size:11.5px">Интер-</div>
<div class="t" style="left:722px;top:778px;font-size:11.5px">поляция</div>
<div class="a" style="left:792px;top:734px;width:13px;height:13px;border-top:1px solid #808080;border-left:1px solid #808080;border-right:1px solid #fff;border-bottom:1px solid #fff"></div><div class="a" style="left:793px;top:735px;width:11px;height:11px;border-top:1px solid #404040;border-left:1px solid #404040;border-right:1px solid #d4d0c8;border-bottom:1px solid #d4d0c8;background:#d4d0c8"></div>
<svg class="a" style="left:795px;top:737px" width="8" height="8"><path d="M0.5 3.5l2.5 2.5 4.5-5" stroke="#808080" stroke-width="1.6" fill="none"/></svg>
<div class="t" style="left:812px;top:736px;color:#fff">отображать все точки</div>
<div class="t" style="left:811px;top:735px;color:#808080">отображать все точки</div>
<div class="a" style="left:1210px;top:646px;width:40px;height:40px;border:1px solid #404040;background:#fffdf6"></div>
<svg class="a" style="left:1214px;top:650px" width="32" height="32"><defs><linearGradient id="gsd" x1="0" y1="0" x2="0" y2="1"><stop offset="0" stop-color="#c8d8e8"/><stop offset="1" stop-color="#7fa0c8"/></linearGradient></defs><rect x="1" y="1" width="30" height="30" fill="url(#gsd)" stroke="#5a8ed0" stroke-width="2"/><path d="M11 9h9v8h4l-8.5 8L7 17h4z" fill="#d0e0ee" opacity="0.85"/></svg>

<svg class="a" style="left:0;top:0" width="1366" height="836" font-family="Liberation Sans, sans-serif">
<path d="M446 616.5H1334 M446 591.5H1334 M446 567.5H1334 M446 543.5H1334 M446 518.5H1334 M446 494.5H1334 M446 469.5H1334 M446 445.5H1334 M446 421.5H1334 M446 396.5H1334 M446 372.5H1334 M446 348.5H1334 M446 323.5H1334 M446 299.5H1334 M446 275.5H1334 M446 250.5H1334 M446 226.5H1334 M446 202.5H1334 M446 177.5H1334" stroke="#6a6a6a" stroke-width="1" stroke-dasharray="3 3" shape-rendering="crispEdges" fill="none"/>
<path d="M445 640.5H449 M445 616.5H449 M445 591.5H449 M445 567.5H449 M445 543.5H449 M445 518.5H449 M445 494.5H449 M445 469.5H449 M445 445.5H449 M445 421.5H449 M445 396.5H449 M445 372.5H449 M445 348.5H449 M445 323.5H449 M445 299.5H449 M445 275.5H449 M445 250.5H449 M445 226.5H449 M445 202.5H449 M445 177.5H449 M445 153.5H449" stroke="#404040" stroke-width="1" shape-rendering="crispEdges"/>
<path d="M509.5 154V639 M568.5 154V639 M627.5 154V639 M686.5 154V639 M745.5 154V639 M804.5 154V639 M863.5 154V639 M922.5 154V639 M980.5 154V639 M1039.5 154V639 M1098.5 154V639 M1157.5 154V639 M1216.5 154V639 M1275.5 154V639" stroke="#6a6a6a" stroke-width="1" stroke-dasharray="3 3" shape-rendering="crispEdges" fill="none"/>
<path d="M450.5 641V645 M465.5 641V643 M480.5 641V643 M495.5 641V643 M509.5 641V645 M524.5 641V643 M539.5 641V643 M553.5 641V643 M568.5 641V645 M583.5 641V643 M598.5 641V643 M612.5 641V643 M627.5 641V645 M642.5 641V643 M657.5 641V643 M671.5 641V643 M686.5 641V645 M701.5 641V643 M715.5 641V643 M730.5 641V643 M745.5 641V645 M760.5 641V643 M774.5 641V643 M789.5 641V643 M804.5 641V645 M818.5 641V643 M833.5 641V643 M848.5 641V643 M863.5 641V645 M877.5 641V643 M892.5 641V643 M907.5 641V643 M922.5 641V645 M936.5 641V643 M951.5 641V643 M966.5 641V643 M980.5 641V645 M995.5 641V643 M1010.5 641V643 M1025.5 641V643 M1039.5 641V645 M1054.5 641V643 M1069.5 641V643 M1083.5 641V643 M1098.5 641V645 M1113.5 641V643 M1128.5 641V643 M1142.5 641V643 M1157.5 641V645 M1172.5 641V643 M1187.5 641V643 M1201.5 641V643 M1216.5 641V645 M1231.5 641V643 M1245.5 641V643 M1260.5 641V643 M1275.5 641V645" stroke="#404040" stroke-width="1" shape-rendering="crispEdges"/>
<path d="M449 153.5H1335M1334.5 153V640" stroke="#000" stroke-width="1" stroke-dasharray="4 2" shape-rendering="crispEdges" fill="none"/>
<rect x="449" y="153" width="2" height="488" fill="#000"/>
<rect x="449" y="639" width="886" height="2" fill="#000"/>
<text x="443.5" y="644.5" font-size="11" text-anchor="end">0,5</text>
<text x="443.5" y="620.5" font-size="11" text-anchor="end">0,55</text>
<text x="443.5" y="595.5" font-size="11" text-anchor="end">0,6</text>
<text x="443.5" y="571.5" font-size="11" text-anchor="end">0,65</text>
<text x="443.5" y="547.5" font-size="11" text-anchor="end">0,7</text>
<text x="443.5" y="522.5" font-size="11" text-anchor="end">0,75</text>
<text x="443.5" y="498.5" font-size="11" text-anchor="end">0,8</text>
<text x="443.5" y="473.5" font-size="11" text-anchor="end">0,85</text>
<text x="443.5" y="449.5" font-size="11" text-anchor="end">0,9</text>
<text x="443.5" y="425.5" font-size="11" text-anchor="end">0,95</text>
<text x="443.5" y="400.5" font-size="11" text-anchor="end">1</text>
<text x="443.5" y="376.5" font-size="11" text-anchor="end">1,05</text>
<text x="443.5" y="352.5" font-size="11" text-anchor="end">1,1</text>
<text x="443.5" y="327.5" font-size="11" text-anchor="end">1,15</text>
<text x="443.5" y="303.5" font-size="11" text-anchor="end">1,2</text>
<text x="443.5" y="279.5" font-size="11" text-anchor="end">1,25</text>
<text x="443.5" y="254.5" font-size="11" text-anchor="end">1,3</text>
<text x="443.5" y="230.5" font-size="11" text-anchor="end">1,35</text>
<text x="443.5" y="206.5" font-size="11" text-anchor="end">1,4</text>
<text x="443.5" y="181.5" font-size="11" text-anchor="end">1,45</text>
<text x="443.5" y="157.5" font-size="11" text-anchor="end">1,5</text>
<text transform="translate(513.5 647) rotate(-90)" font-size="11" text-anchor="end">-10</text>
<text transform="translate(572.5 647) rotate(-90)" font-size="11" text-anchor="end">40</text>
<text transform="translate(631.5 647) rotate(-90)" font-size="11" text-anchor="end">90</text>
<text transform="translate(690.5 647) rotate(-90)" font-size="11" text-anchor="end">140</text>
<text transform="translate(749.5 647) rotate(-90)" font-size="11" text-anchor="end">190</text>
<text transform="translate(808.5 647) rotate(-90)" font-size="11" text-anchor="end">240</text>
<text transform="translate(867.5 647) rotate(-90)" font-size="11" text-anchor="end">290</text>
<text transform="translate(926.5 647) rotate(-90)" font-size="11" text-anchor="end">340</text>
<text transform="translate(984.5 647) rotate(-90)" font-size="11" text-anchor="end">390</text>
<text transform="translate(1043.5 647) rotate(-90)" font-size="11" text-anchor="end">440</text>
<text transform="translate(1102.5 647) rotate(-90)" font-size="11" text-anchor="end">490</text>
<text transform="translate(1161.5 647) rotate(-90)" font-size="11" text-anchor="end">540</text>
<text transform="translate(1220.5 647) rotate(-90)" font-size="11" text-anchor="end">590</text>
<text transform="translate(1279.5 647) rotate(-90)" font-size="11" text-anchor="end">640</text>
<text transform="translate(1338.5 647) rotate(-90)" font-size="11" text-anchor="end">690</text>
<path d="M450 396.5H1334" stroke="#0c7c44" stroke-width="1" shape-rendering="crispEdges"/>
<polyline points="450.5,396.5 509.5,396.5 568.5,396.5 627.5,396.5 686.5,396.5 745.5,396.5 804.5,396.5 863.5,396.5 922.5,396.5 980.5,396.5 1039.5,394.5 1098.5,392.5 1157.5,390.5 1216.5,389.5 1275.5,389.5 1334.5,389.5" stroke="#0c4a9a" stroke-width="1" fill="none" shape-rendering="crispEdges"/>
<rect x="447" y="393" width="7" height="7" fill="#000"/><rect x="448" y="394" width="5" height="5" fill="#164a94"/>
<text x="450.5" y="388" font-size="10.5" fill="#8a0010" stroke="#8a0010" stroke-width="0.25" text-anchor="middle" textLength="16.5" lengthAdjust="spacingAndGlyphs">1,00</text>
<rect x="506" y="393" width="7" height="7" fill="#000"/><rect x="507" y="394" width="5" height="5" fill="#164a94"/>
<text x="509.5" y="388" font-size="10.5" fill="#8a0010" stroke="#8a0010" stroke-width="0.25" text-anchor="middle" textLength="16.5" lengthAdjust="spacingAndGlyphs">1,00</text>
<rect x="565" y="393" width="7" height="7" fill="#000"/><rect x="566" y="394" width="5" height="5" fill="#164a94"/>
<text x="568.5" y="388" font-size="10.5" fill="#8a0010" stroke="#8a0010" stroke-width="0.25" text-anchor="middle" textLength="16.5" lengthAdjust="spacingAndGlyphs">1,00</text>
<rect x="624" y="393" width="7" height="7" fill="#000"/><rect x="625" y="394" width="5" height="5" fill="#164a94"/>
<text x="627.5" y="388" font-size="10.5" fill="#8a0010" stroke="#8a0010" stroke-width="0.25" text-anchor="middle" textLength="16.5" lengthAdjust="spacingAndGlyphs">1,00</text>
<rect x="683" y="393" width="7" height="7" fill="#000"/><rect x="684" y="394" width="5" height="5" fill="#164a94"/>
<text x="686.5" y="388" font-size="10.5" fill="#8a0010" stroke="#8a0010" stroke-width="0.25" text-anchor="middle" textLength="16.5" lengthAdjust="spacingAndGlyphs">1,00</text>
<rect x="742" y="393" width="7" height="7" fill="#000"/><rect x="743" y="394" width="5" height="5" fill="#164a94"/>
<text x="745.5" y="388" font-size="10.5" fill="#8a0010" stroke="#8a0010" stroke-width="0.25" text-anchor="middle" textLength="16.5" lengthAdjust="spacingAndGlyphs">1,00</text>
<rect x="801" y="393" width="7" height="7" fill="#000"/><rect x="802" y="394" width="5" height="5" fill="#164a94"/>
<text x="804.5" y="388" font-size="10.5" fill="#8a0010" stroke="#8a0010" stroke-width="0.25" text-anchor="middle" textLength="16.5" lengthAdjust="spacingAndGlyphs">1,00</text>
<rect x="860" y="393" width="7" height="7" fill="#000"/><rect x="861" y="394" width="5" height="5" fill="#164a94"/>
<text x="863.5" y="388" font-size="10.5" fill="#8a0010" stroke="#8a0010" stroke-width="0.25" text-anchor="middle" textLength="16.5" lengthAdjust="spacingAndGlyphs">1,00</text>
<rect x="919" y="393" width="7" height="7" fill="#000"/><rect x="920" y="394" width="5" height="5" fill="#164a94"/>
<text x="922.5" y="388" font-size="10.5" fill="#8a0010" stroke="#8a0010" stroke-width="0.25" text-anchor="middle" textLength="16.5" lengthAdjust="spacingAndGlyphs">1,00</text>
<rect x="977" y="393" width="7" height="7" fill="#000"/><rect x="978" y="394" width="5" height="5" fill="#164a94"/>
<text x="980.5" y="388" font-size="10.5" fill="#8a0010" stroke="#8a0010" stroke-width="0.25" text-anchor="middle" textLength="16.5" lengthAdjust="spacingAndGlyphs">1,00</text>
<rect x="1036" y="391" width="7" height="7" fill="#000"/><rect x="1037" y="392" width="5" height="5" fill="#164a94"/>
<text x="1039.5" y="386" font-size="10.5" fill="#8a0010" stroke="#8a0010" stroke-width="0.25" text-anchor="middle" textLength="16.5" lengthAdjust="spacingAndGlyphs">1,00</text>
<rect x="1095" y="389" width="7" height="7" fill="#000"/><rect x="1096" y="390" width="5" height="5" fill="#164a94"/>
<text x="1098.5" y="384" font-size="10.5" fill="#8a0010" stroke="#8a0010" stroke-width="0.25" text-anchor="middle" textLength="16.5" lengthAdjust="spacingAndGlyphs">1,01</text>
<rect x="1154" y="387" width="7" height="7" fill="#000"/><rect x="1155" y="388" width="5" height="5" fill="#164a94"/>
<text x="1157.5" y="382" font-size="10.5" fill="#8a0010" stroke="#8a0010" stroke-width="0.25" text-anchor="middle" textLength="16.5" lengthAdjust="spacingAndGlyphs">1,01</text>
<rect x="1213" y="386" width="7" height="7" fill="#000"/><rect x="1214" y="387" width="5" height="5" fill="#164a94"/>
<text x="1216.5" y="381" font-size="10.5" fill="#8a0010" stroke="#8a0010" stroke-width="0.25" text-anchor="middle" textLength="16.5" lengthAdjust="spacingAndGlyphs">1,01</text>
<rect x="1272" y="386" width="7" height="7" fill="#000"/><rect x="1273" y="387" width="5" height="5" fill="#164a94"/>
<text x="1275.5" y="381" font-size="10.5" fill="#8a0010" stroke="#8a0010" stroke-width="0.25" text-anchor="middle" textLength="16.5" lengthAdjust="spacingAndGlyphs">1,01</text>
<rect x="1331" y="386" width="7" height="7" fill="#000"/><rect x="1332" y="387" width="5" height="5" fill="#164a94"/>
<text x="1334.5" y="381" font-size="10.5" fill="#8a0010" stroke="#8a0010" stroke-width="0.25" text-anchor="middle" textLength="16.5" lengthAdjust="spacingAndGlyphs">1,01</text>
<text x="867" y="122.5" font-size="12.2" font-weight="bold" text-anchor="middle" textLength="183" lengthAdjust="spacingAndGlyphs">Барокоррекция топливоподачи</text>
<path d="M450 139.5H479" stroke="#0c7c44" stroke-width="1" shape-rendering="crispEdges"/>
<text x="484" y="144" font-size="12">M76009NSS132021 МИКАС-7.BIN</text>
<path d="M735 139.5H765" stroke="#0c4a9a" stroke-width="1" shape-rendering="crispEdges"/>
<rect x="747" y="136" width="7" height="7" fill="#000"/><rect x="748" y="137" width="5" height="5" fill="#164a94"/>
<text x="769.5" y="144" font-size="12.3">301109_16PART PHH2400_280110.001.BIN</text>
<text x="891.5" y="692" font-size="11.3" font-weight="bold" text-anchor="middle">Атмосферное давление, мм.рт.ст.</text>
<text transform="translate(415 396) rotate(-90)" font-size="11.3" font-weight="bold" text-anchor="middle">Коррекция топливоподачи</text>
<ellipse cx="1159" cy="376.5" rx="196.8" ry="96.5" stroke="#f41616" stroke-width="4.6" fill="none"/>
</svg>
<!-- status bar -->
<div class="a" style="left:4px;top:814px;width:89px;height:17px;border-top:1px solid #808080;border-left:1px solid #808080;border-right:1px solid #fff;border-bottom:1px solid #fff"></div>
<div class="a" style="left:95px;top:814px;width:78px;height:17px;border-top:1px solid #808080;border-left:1px solid #808080;border-right:1px solid #fff;border-bottom:1px solid #fff"></div>
<div class="a" style="left:175px;top:814px;width:1188px;height:17px;border-top:1px solid #808080;border-left:1px solid #808080;border-bottom:1px solid #fff"></div>
<div class="t" style="left:6px;top:816px">Микас 7.6</div>
<div class="t" style="left:97px;top:816px">неизв. ПО</div>
<div class="t" style="left:177px;top:816px">Y=0,412</div>
<svg class="a" style="left:1350px;top:818px" width="14" height="14">
<path d="M13 1L1 13M13 5L5 13M13 9L9 13" stroke="#808080" stroke-width="1.4"/>
<path d="M13 2.5L2.5 13M13 6.5L6.5 13M13 10.5L10.5 13" stroke="#fff" stroke-width="0.8"/>
</svg>
<svg class="a" style="left:1210px;top:772px" width="156" height="64"><path d="M6.0,3.0 L38.0,10.5 L34.0,15.0 L8.0,12.5 L5.5,8.0Z M155.0,3.0 L123.0,10.5 L127.0,15.0 L153.0,12.5 L155.5,8.0Z M9.0,16.5 L34.0,15.0 L34.5,21.5 L13.0,23.5Z M152.0,16.5 L127.0,15.0 L126.5,21.5 L148.0,23.5Z M15.0,27.0 L35.0,23.0 L37.0,29.5 L19.5,32.5Z M146.0,27.0 L126.0,23.0 L124.0,29.5 L141.5,32.5Z M23.5,33.5 L38.5,30.5 L40.0,37.0 L27.5,39.0Z M137.5,33.5 L122.5,30.5 L121.0,37.0 L133.5,39.0Z M31.5,39.5 L39.0,38.0 L50.0,47.5 L40.0,47.0Z M129.5,39.5 L122.0,38.0 L111.0,47.5 L121.0,47.0Z" fill="none" stroke="#5c5c5c" stroke-width="0.9"/><path d="M38.5,10.5V31M122.5,10.5V31" stroke="#5c5c5c" stroke-width="0.9"/><text x="80.5" y="33.5" font-family="Liberation Sans" font-weight="bold" font-size="30" text-anchor="middle" textLength="79" lengthAdjust="spacingAndGlyphs" fill="none" stroke="#555" stroke-width="1">LANOS</text><text x="80.5" y="47.5" font-family="Liberation Sans" font-weight="bold" font-size="10.5" text-anchor="middle" textLength="56" lengthAdjust="spacingAndGlyphs" fill="none" stroke="#555" stroke-width="0.7">CLAN</text><text x="80.5" y="65" font-family="Liberation Sans" font-weight="bold" font-size="9" text-anchor="middle" textLength="77" lengthAdjust="spacingAndGlyphs" fill="#7a7a7a">UKRAINIAN CLUB</text></svg>
<div class="a" style="left:0;top:833px;width:1366px;height:1px;background:#404040"></div>
<div class="a" style="left:0;top:834px;width:670px;height:2px;background:#1f4c9c"></div><div class="a" style="left:670px;top:834px;width:482px;height:2px;background:#3a3a3a"></div><div class="a" style="left:1152px;top:834px;width:214px;height:2px;background:#2a5aa8"></div>

</body></html>
